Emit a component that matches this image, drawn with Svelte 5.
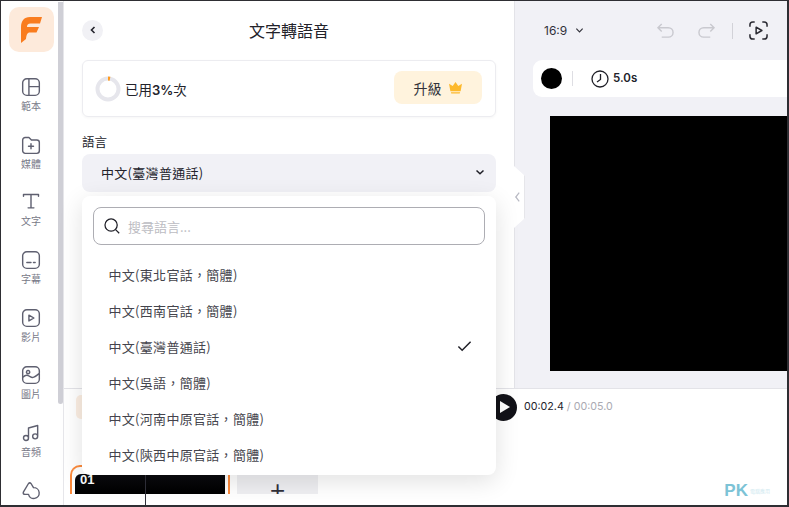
<script>
  const nav = [
    { label: '範本', d: 'M7 2h10a5 5 0 0 1 5 5v10a5 5 0 0 1-5 5H7a5 5 0 0 1-5-5V7a5 5 0 0 1 5-5zM9.500 2v20M9.500 11.500H22' },
    { label: '媒體', d: 'M2 6a3 3 0 0 1 3-3h4.500l3 3H19a3 3 0 0 1 3 3v10a3 3 0 0 1-3 3H5a3 3 0 0 1-3-3zM12 10.500v6M9 13.500h6' },
    { label: '文字', d: 'M3 5V3h18v2M12 3v16M8.500 19h7' },
    { label: '字幕', d: 'M7 2h10a5 5 0 0 1 5 5v10a5 5 0 0 1-5 5H7a5 5 0 0 1-5-5V7a5 5 0 0 1 5-5zM7 15h5M15 15h2' },
    { label: '影片', d: 'M7 2h10a5 5 0 0 1 5 5v10a5 5 0 0 1-5 5H7a5 5 0 0 1-5-5V7a5 5 0 0 1 5-5zM9.500 8.500l6 3.500-6 3.500z' },
    { label: '圖片', d: 'M7 2h10a5 5 0 0 1 5 5v10a5 5 0 0 1-5 5H7a5 5 0 0 1-5-5V7a5 5 0 0 1 5-5zM2 15c4-4 6-3 9-1s5 1 11-4M8.500 6.500a2 2 0 1 0 .01 0z' },
    { label: '音頻', d: 'M9 18V6l11-3v13M9 18a3 3 0 1 1-6 0 3 3 0 0 1 6 0zM20 16a3 3 0 1 1-6 0 3 3 0 0 1 6 0z' }
  ];
  const c = '\uFF0C';
  const langs = [`中文(東北官話${c}簡體)`, `中文(西南官話${c}簡體)`, '中文(臺灣普通話)', `中文(吳語${c}簡體)`, `中文(河南中原官話${c}簡體)`, `中文(陝西中原官話${c}簡體)`];
  const hidden = `中文(廣東話${c}繁體)`;
</script>

<div class="frame">
  <aside class="side">
    <div class="logo">
      <svg viewBox="0 0 21 26" width="21" height="26"><path fill="#f97c1e" d="M21 0 19 6.500H9.500C7 6.500 6 8 6 10H18L15.500 15.500H9C6 15.500 5.500 18 5 22L0 26V10C0 4 3 0 9 0Z"/></svg>
    </div>
    {#each nav as n}
      <div class="nav">
        <svg viewBox="0 0 24 24" width="20" height="20"><path fill="none" stroke="#5f6070" stroke-width="1.700" stroke-linecap="round" stroke-linejoin="round" d={n.d}/></svg>
        <span>{n.label}</span>
      </div>
    {/each}
    <div class="nav">
      <svg viewBox="0 0 24 24" width="20" height="20"><path fill="none" stroke="#5f6070" stroke-width="1.700" stroke-linejoin="round" d="M9 3 3 13c-1 2 0 3 2 3h4a6.500 6.500 0 1 0 6-8l-3-5c-1-1-2-1-3 0z"/></svg>
    </div>
    <i class="scroll"></i>
  </aside>

  <div class="main">
    <div class="top">
      <section class="panel">
        <header class="head">
          <button class="back" aria-label="返回">
            <svg viewBox="0 0 10 10" width="10" height="10"><path d="M6.500 2 3.500 5l3 3" fill="none" stroke="#23232b" stroke-width="1.600"/></svg>
          </button>
          <h1>文字轉語音</h1>
        </header>
        <div class="usage">
          <div class="used">
            <svg viewBox="0 0 26 26" width="26" height="26">
              <circle cx="13" cy="13" r="10.500" fill="none" stroke="#e6e6ec" stroke-width="4"/>
              <path d="M13 2.500A10.500 10.500 0 0 1 15 2.700" fill="none" stroke="#ff9a1f" stroke-width="4"/>
            </svg>
            <span>已用<b>3%</b>次</span>
          </div>
          <button class="upgrade">升級
            <svg viewBox="0 0 16 14" width="15" height="13"><path fill="#fdb92c" d="M8 1l3 4.500L15 3l-1.500 8h-11L1 3l4 2.500zM3 12h10l-.5 1.500h-9z"/></svg>
          </button>
        </div>
        <div class="label">語言</div>
        <div class="select">
          <span>中文(臺灣普通話)</span>
          <svg viewBox="0 0 10 10" width="10" height="10"><path d="M1.500 3.500 5 6.800l3.500-3.300" fill="none" stroke="#1f1f27" stroke-width="1.500"/></svg>
        </div>
      </section>
      <div class="handle">
        <svg viewBox="0 0 8 14" width="7" height="12"><path d="M6 2 2 7l4 5" fill="none" stroke="#b9bac4" stroke-width="1.500"/></svg>
      </div>
      <section class="stage">
        <div class="tools">
          <span class="ratio">16:9</span>
          <svg viewBox="0 0 10 10" width="9" height="9"><path d="M1.500 3 5 6.500 8.500 3" fill="none" stroke="#33333b" stroke-width="1.300"/></svg>
          <div class="hist">
            <svg viewBox="0 0 20 18" width="19" height="17"><path d="M6 2 2 6l4 4M2 6h11a5 5 0 0 1 0 10H6" fill="none" stroke="#c9c9cf" stroke-width="1.500"/></svg>
            <svg viewBox="0 0 20 18" width="19" height="17"><path d="m14 2 4 4-4 4M18 6H7a5 5 0 0 0 0 10h7" fill="none" stroke="#c9c9cf" stroke-width="1.500"/></svg>
            <i class="vsep"></i>
            <svg viewBox="0 0 20 20" width="19" height="19"><path d="M1 6V4a3 3 0 0 1 3-3h2M14 1h2a3 3 0 0 1 3 3v2M19 14v2a3 3 0 0 1-3 3h-2M6 19H4a3 3 0 0 1-3-3v-2M7.500 6.500l6 3.500-6 3.500z" fill="none" stroke="#2a2a32" stroke-width="1.600" stroke-linejoin="round"/></svg>
          </div>
        </div>
        <div class="bar">
          <i class="dot"></i>
          <i class="barsep"></i>
          <svg viewBox="0 0 18 18" width="18" height="18"><circle cx="9" cy="9" r="8" fill="none" stroke="#1f1f27" stroke-width="1.300"/><path d="M9.500 4v5.500L6 12" fill="none" stroke="#1f1f27" stroke-width="1.300"/></svg>
          <b>5.0s</b>
        </div>
        <div class="canvas"></div>
      </section>
    </div>

    <section class="timeline">
      <div class="controls">
        <i class="chip"></i>
        <button class="play" aria-label="播放">
          <svg viewBox="0 0 12 14" width="12" height="14"><path d="M1 1l10 6-10 6z" fill="#fff"/></svg>
        </button>
        <span class="time">00:02.4 <em>/ 00:05.0</em></span>
      </div>
      <div class="tracks">
        <div class="clip">
          <div class="thumb"><b>01</b></div>
          <i class="tick"></i>
        </div>
        <div class="add"><span>+</span></div>
      </div>
      <i class="cursor"></i>
      <div class="mark"><b>PK</b><span>電腦應用</span></div>
    </section>
  </div>

  <div class="pop">
    <div class="search">
      <svg viewBox="0 0 20 20" width="18" height="18"><circle cx="9" cy="9" r="6.800" fill="none" stroke="#1f1f27" stroke-width="1.400"/><path d="m14 14 4 4" stroke="#1f1f27" stroke-width="1.400"/></svg>
      <span>搜尋語言...</span>
    </div>
    <div class="list">
      <div class="row first"><span>{hidden}</span></div>
      {#each langs as l, i}
        <div class="row">
          <span>{l}</span>
          {#if i === 2}
            <svg viewBox="0 0 16 12" width="15" height="12"><path d="M1.500 6.500 5.500 10.500 14.500 1.500" fill="none" stroke="#1f1f27" stroke-width="1.600"/></svg>
          {/if}
        </div>
      {/each}
    </div>
  </div>
</div>

<style>
  :global(body) { margin: 0; }
  * { box-sizing: border-box; }
  .frame {
    position: relative; width: 789px; height: 507px; overflow: hidden; display: flex;
    background: #fff; border: solid #2e2e33; border-width: 1px 2px 2px 1px;
    font-family: "Noto Sans CJK TC", "Liberation Sans", sans-serif; color: #22222a;
  }
  .side { position: relative; width: 63px; flex: none; border-right: 1px solid #e6e6ea; display: flex; flex-direction: column; align-items: center; padding: 6px 2px 0 0; overflow: hidden; }
  .logo { width: 45px; height: 45px; flex: none; border-radius: 10px; background: #fdeadb; display: flex; align-items: center; justify-content: center; margin: 0 0 25px 0; }
  .nav { height: 57.700px; display: flex; flex-direction: column; align-items: center; flex: none; }
  .nav span { font-size: 10px; line-height: 12px; margin-top: 3px; color: #777887; }
  .scroll { position: absolute; left: 57px; top: 1px; width: 5px; height: 402px; background: #cfcfd6; border-radius: 0 0 3px 3px; }
  .main { flex: 1; min-width: 0; display: flex; flex-direction: column; }
  .top { flex: none; height: 388px; display: flex; position: relative; border-bottom: 1px solid #e3e3e8; }
  .panel { width: 451px; flex: none; padding: 0 18px; border-right: 1px solid #e3e3e8; }
  .head { height: 59px; display: flex; align-items: center; position: relative; }
  .back { width: 21px; height: 21px; border-radius: 50%; background: #f1f1f5; border: 0; padding: 0; display: flex; align-items: center; justify-content: center; margin-top: -1px; }
  h1 { position: absolute; left: 0; right: 0; margin: -1px 0 0; text-align: center; font-size: 16px; font-weight: 400; line-height: 20px; }
  .usage { height: 57px; width: 414px; border: 1px solid #ececf0; border-radius: 6px; box-shadow: 0 1px 3px #0000000a; display: flex; align-items: center; justify-content: space-between; padding: 0 13px 2px 12px; }
  .used { display: flex; align-items: center; gap: 4px; font-size: 13.500px; margin-top: 2px; }
  .used b { font-family: "Inter", sans-serif; font-weight: 600; font-size: 13px; }
  .upgrade { width: 88px; height: 33px; border: 0; border-radius: 8px; background: #fff3dd; font: inherit; font-size: 14px; color: #33333b; display: flex; align-items: center; justify-content: center; gap: 6px; padding: 0; }
  .label { font-size: 12.500px; line-height: 18px; margin-top: 16px; }
  .select { width: 414px; height: 38px; margin-top: 3px; border-radius: 8px; background: #f1f1f6; display: flex; align-items: center; justify-content: space-between; padding: 0 11px 2px 19px; font-size: 13px; letter-spacing: .3px; }
  .handle { position: absolute; left: 450px; top: 165px; width: 11px; height: 62px; background: #fff; border-right: 1px solid #e6e6ea; border-radius: 0 6px 6px 0; display: flex; align-items: center; justify-content: flex-start; z-index: 1; clip-path: polygon(0 0, 100% 16%, 100% 84%, 0 100%); }
  .stage { flex: 1; min-width: 0; background: #f1f1f6; padding: 0 0 0 18px; overflow: hidden; }
  .tools { height: 59px; display: flex; align-items: center; gap: 8px; padding: 0 19px 0 11px; font-family: "Inter", sans-serif; }
  .ratio { font-size: 12px; color: #30303a; }
  .hist { margin-left: auto; display: flex; align-items: center; gap: 22px; }
  .vsep { width: 1px; height: 16px; background: #d2d2d8; margin: 0 -6px; }
  .bar { height: 37px; background: #fff; border-radius: 9px 0 0 9px; display: flex; align-items: center; padding-left: 8px; margin-right: -1px; }
  .dot { width: 21px; height: 21px; border-radius: 50%; background: #000; flex: none; }
  .barsep { width: 1px; height: 15px; background: #dedee3; margin: 0 18px 0 10px; }
  .bar b { font-family: "Inter", sans-serif; font-size: 11.500px; font-weight: 600; margin-left: 4px; margin-top: -2px; }
  .canvas { height: 255px; margin-top: 19px; margin-left: 17px; background: #000; }
  .timeline { position: relative; flex: 1; min-height: 0; }
  .controls { height: 36px; display: flex; align-items: center; padding-left: 12px; }
  .chip { width: 22px; height: 24px; flex: none; background: #fbeee2; border-radius: 5px; margin-right: 389px; }
  .play { width: 27px; height: 27px; flex: none; border: 0; border-radius: 50%; background: #121218; display: flex; align-items: center; justify-content: center; padding: 0 0 0 2px; margin-right: 7px; margin-left: 3px; }
  .time { font-family: "Inter", sans-serif; font-size: 10.700px; color: #23232b; margin-top: -1px; white-space: nowrap; }
  .time em { font-style: normal; color: #aaaab2; }
  .tracks { margin: 40px 0 0 6px; display: flex; align-items: flex-end; }
  .clip { display: flex; align-items: stretch; flex: none; height: 29px; border: solid #fb8a3c; border-width: 2px 0 0 2px; border-radius: 10px 0 0 0; padding: 7px 0 0 3px; }
  .thumb { width: 150px; background: linear-gradient(#0b0b0f, #000); border-radius: 6px 0 0 0; padding-left: 5px; color: #fff; font: 700 13px/11px "Liberation Sans", sans-serif; }
  .tick { width: 2px; margin-left: 3px; background: #fb8a3c; }
  .add { width: 81px; height: 20px; margin-left: 7px; background: #efeff2; text-align: center; overflow: hidden; font: 400 26px/32px "Liberation Sans", sans-serif; color: #30303a; }
  .cursor { position: absolute; left: 81px; top: 85px; width: 1px; height: 40px; background: #30303a; }
  .mark { position: absolute; right: 17px; bottom: 6px; display: flex; align-items: center; color: #7cc3d6; }
  .mark b { font: 700 17px/17px "Liberation Sans", sans-serif; }
  .mark span { font-size: 5px; margin-left: 2px; opacity: .35; }
  .pop { position: absolute; left: 81px; top: 195px; width: 414px; height: 279px; background: #fff; border-radius: 8px; box-shadow: 0 6px 24px #0000001f; display: flex; flex-direction: column; overflow: hidden; z-index: 3; }
  .search { margin: 11px 11px 0; height: 38px; border: 1px solid #adadb3; border-radius: 8px; display: flex; align-items: center; gap: 7px; padding-left: 9px; background: #fff; font-size: 13px; color: #bcbcc2; flex: none; }
  .list { flex: 1; min-height: 0; overflow: hidden; }
  .row { height: 36px; display: flex; align-items: center; justify-content: space-between; padding: 0 24px 0 26.500px; font-size: 13px; letter-spacing: .3px; color: #44444c; }
  .first { margin-top: -29px; margin-bottom: 4px; }
</style>
